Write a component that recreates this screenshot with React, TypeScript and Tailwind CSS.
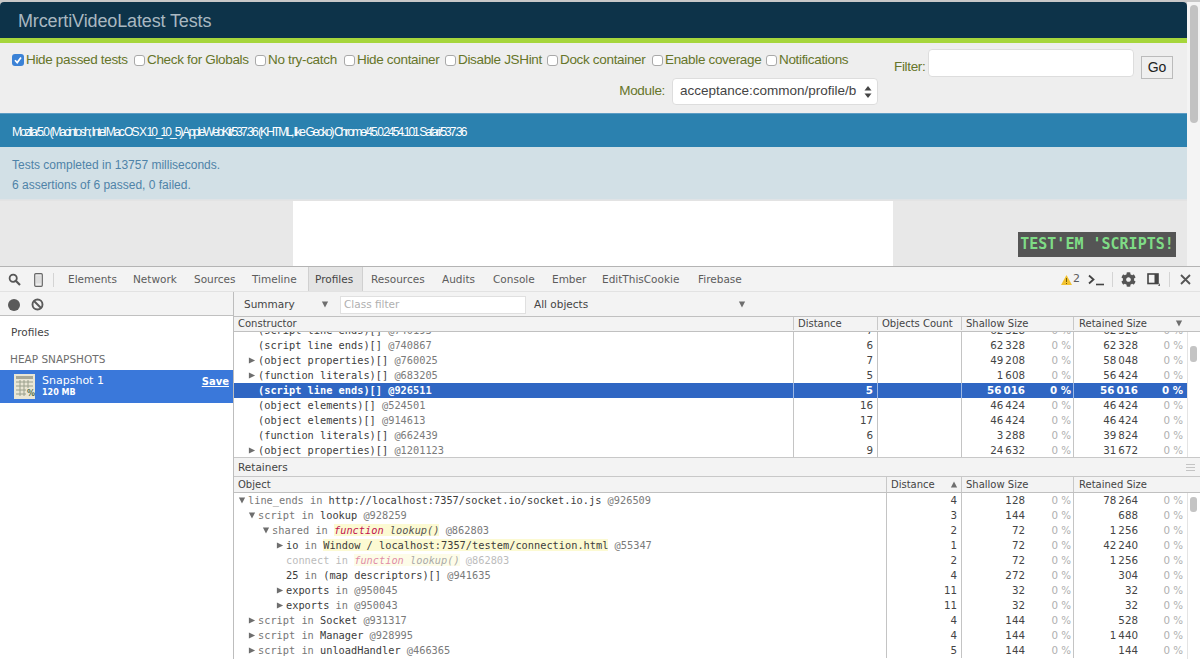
import { type FC, type ReactElement, type ReactNode } from "react";
import { FaCog } from "react-icons/fa";

const checks: { label: string; checked?: boolean; cls: string }[] = [
  { label: "Hide passed tests", checked: true, cls: "w-[122px]" },
  { label: "Check for Globals", cls: "w-[121px]" },
  { label: "No try-catch", cls: "w-[89px]" },
  { label: "Hide container", cls: "w-[101px]" },
  { label: "Disable JSHint", cls: "w-[102px]" },
  { label: "Dock container", cls: "w-[105px]" },
  { label: "Enable coverage", cls: "w-[114px]" },
  { label: "Notifications", cls: "w-[90px]" },
];

const tabs: { label: string; cls: string; active?: boolean }[] = [
  { label: "Elements", cls: "w-[65px] pl-[8px]" },
  { label: "Network", cls: "w-[61px] pl-[8px]" },
  { label: "Sources", cls: "w-[58px] pl-[8px]" },
  { label: "Timeline", cls: "w-[64px] pl-[8px]" },
  { label: "Profiles", cls: "w-[55px] pl-[6px]", active: true },
  { label: "Resources", cls: "w-[71px] pl-[8px]" },
  { label: "Audits", cls: "w-[51px] pl-[8px]" },
  { label: "Console", cls: "w-[59px] pl-[8px]" },
  { label: "Ember", cls: "w-[50px] pl-[8px]" },
  { label: "EditThisCookie", cls: "w-[96px] pl-[8px]" },
  { label: "Firebase", cls: "w-[60px] pl-[8px]" },
];

const Tri: FC<{ dir?: "right" | "down" | "up"; selected?: boolean }> = ({ dir = "right", selected }): ReactElement => {
  const pts = dir === "right" ? "1,1 8,4.5 1,8" : dir === "down" ? "1,1 8,1 4.5,8" : "1,8 8,8 4.5,1";
  return (
    <svg width="8" height="9" viewBox="0 0 9 9" className="shrink-0">
      <polygon points={pts} fill={selected ? "#fff" : "#6e6e6e"} />
    </svg>
  );
};

const Check: FC<{ checked?: boolean }> = ({ checked }): ReactElement =>
  checked ? (
    <span className="mr-[2px] flex h-[12px] w-[12px] shrink-0 items-center justify-center rounded-[3px] bg-[#3b82d6]">
      <svg width="10" height="10" viewBox="0 0 10 10">
        <path d="M2 5.2 L4.2 7.6 L8 2.4" fill="none" stroke="#fff" strokeWidth="1.7" />
      </svg>
    </span>
  ) : (
    <span className="mr-[2px] h-[11px] w-[11px] shrink-0 rounded-[3px] border border-[#a9a9a9] bg-white" />
  );

const Id: FC<{ children: ReactNode }> = ({ children }): ReactElement => <span className="text-[#7a7a7a]">{children}</span>;
const Prop: FC<{ children: ReactNode }> = ({ children }): ReactElement => <span className="text-[#777]">{children}</span>;
const Fn: FC = (): ReactElement => (
  <span className="bg-[#fcfad2] italic">
    <span className="text-[#c2134f]">function</span> <span className="text-[#555]">lookup()</span>
  </span>
);

type RowData = {
  indent: string;
  tri?: "right" | "down";
  name: ReactNode;
  dist: string;
  shallow: string;
  retained: string;
  selected?: boolean;
  clipped?: boolean;
};

const ctor = (name: string, id: string): ReactNode => (
  <>
    {name} <Id>{id}</Id>
  </>
);

// sizes use a thin space between thousands, as devtools does
const topRows: RowData[] = [
  { indent: "pl-[14px]", name: ctor("(script line ends)[]", "@740193"), dist: "7", shallow: "62\u2009328", retained: "62\u2009328", clipped: true },
  { indent: "pl-[14px]", name: ctor("(script line ends)[]", "@740867"), dist: "6", shallow: "62\u2009328", retained: "62\u2009328" },
  { indent: "pl-[14px]", tri: "right", name: ctor("(object properties)[]", "@760025"), dist: "7", shallow: "49\u2009208", retained: "58\u2009048" },
  { indent: "pl-[14px]", tri: "right", name: ctor("(function literals)[]", "@683205"), dist: "5", shallow: "1\u2009608", retained: "56\u2009424" },
  { indent: "pl-[14px]", name: "(script line ends)[] @926511", dist: "5", shallow: "56\u2009016", retained: "56\u2009016", selected: true },
  { indent: "pl-[14px]", name: ctor("(object elements)[]", "@524501"), dist: "16", shallow: "46\u2009424", retained: "46\u2009424" },
  { indent: "pl-[14px]", name: ctor("(object elements)[]", "@914613"), dist: "17", shallow: "46\u2009424", retained: "46\u2009424" },
  { indent: "pl-[14px]", name: ctor("(function literals)[]", "@662439"), dist: "6", shallow: "3\u2009288", retained: "39\u2009824" },
  { indent: "pl-[14px]", tri: "right", name: ctor("(object properties)[]", "@1201123"), dist: "9", shallow: "24\u2009632", retained: "31\u2009672" },
];

const bottomRows: RowData[] = [
  {
    indent: "pl-[4px]",
    tri: "down",
    name: (
      <>
        <Prop>line_ends</Prop> <Prop>in</Prop> http://localhost:7357/socket.io/socket.io.js <Id>@926509</Id>
      </>
    ),
    dist: "4",
    shallow: "128",
    retained: "78\u2009264",
  },
  {
    indent: "pl-[14px]",
    tri: "down",
    name: (
      <>
        <Prop>script</Prop> <Prop>in</Prop> lookup <Id>@928259</Id>
      </>
    ),
    dist: "3",
    shallow: "144",
    retained: "688",
  },
  {
    indent: "pl-[28px]",
    tri: "down",
    name: (
      <>
        <Prop>shared</Prop> <Prop>in</Prop> <Fn /> <Id>@862803</Id>
      </>
    ),
    dist: "2",
    shallow: "72",
    retained: "1\u2009256",
  },
  {
    indent: "pl-[42px]",
    tri: "right",
    name: (
      <>
        io <Prop>in</Prop> <span className="bg-[#fcfad2]">Window / localhost:7357/testem/connection.html</span> <Id>@55347</Id>
      </>
    ),
    dist: "1",
    shallow: "72",
    retained: "42\u2009240",
  },
  {
    indent: "pl-[42px]",
    name: (
      <span className="opacity-50">
        <Prop>connect</Prop> <Prop>in</Prop> <Fn /> <Id>@862803</Id>
      </span>
    ),
    dist: "2",
    shallow: "72",
    retained: "1\u2009256",
  },
  {
    indent: "pl-[42px]",
    name: (
      <>
        25 <Prop>in</Prop> (map descriptors)[] <Id>@941635</Id>
      </>
    ),
    dist: "4",
    shallow: "272",
    retained: "304",
  },
  {
    indent: "pl-[42px]",
    tri: "right",
    name: (
      <>
        exports <Prop>in</Prop> <Id>@950045</Id>
      </>
    ),
    dist: "11",
    shallow: "32",
    retained: "32",
  },
  {
    indent: "pl-[42px]",
    tri: "right",
    name: (
      <>
        exports <Prop>in</Prop> <Id>@950043</Id>
      </>
    ),
    dist: "11",
    shallow: "32",
    retained: "32",
  },
  {
    indent: "pl-[14px]",
    tri: "right",
    name: (
      <>
        <Prop>script</Prop> <Prop>in</Prop> Socket <Id>@931317</Id>
      </>
    ),
    dist: "4",
    shallow: "144",
    retained: "528",
  },
  {
    indent: "pl-[14px]",
    tri: "right",
    name: (
      <>
        <Prop>script</Prop> <Prop>in</Prop> Manager <Id>@928995</Id>
      </>
    ),
    dist: "4",
    shallow: "144",
    retained: "1\u2009440",
  },
  {
    indent: "pl-[14px]",
    tri: "right",
    name: (
      <>
        <Prop>script</Prop> <Prop>in</Prop> unloadHandler <Id>@466365</Id>
      </>
    ),
    dist: "5",
    shallow: "144",
    retained: "144",
  },
];

const Row: FC<{ row: RowData; variant: "top" | "bottom" }> = ({ row, variant }): ReactElement => {
  const sel = row.selected;
  const line = sel ? "border-[#9db8e4]" : "border-[#c4c4c4]";
  const pct = sel ? "font-bold text-white" : "text-[#b0b0b0]";
  return (
    <div
      className={`flex h-[15px] shrink-0 items-center font-['DejaVu_Sans',sans-serif] text-[10.3px] leading-[15px] ${
        sel ? "bg-[#2f66c3] font-bold text-white" : "text-[#444]"
      }`}
    >
      <div
        className={`flex h-full items-center whitespace-nowrap font-['DejaVu_Sans_Mono',monospace] text-[10.3px] ${row.indent} ${
          variant === "top" ? "w-[560px]" : "w-[653px]"
        } border-r ${line} ${sel ? "text-white" : "text-[#3c3c3c]"}`}
      >
        <span className="flex w-[10px] shrink-0 items-center">{row.tri && <Tri dir={row.tri} />}</span>
        <span>{row.name}</span>
      </div>
      <div className={`h-full pr-[4px] text-right border-r ${line} ${variant === "top" ? "w-[84px]" : "w-[75px]"}`}>{row.dist}</div>
      {variant === "top" && <div className={`h-full w-[84px] border-r ${line}`} />}
      <div className={`flex h-full w-[112px] justify-end border-r ${line}`}>
        <span className="pr-[2px]">{row.shallow}</span>
        <span className={`w-[46px] pr-[2px] text-right ${pct}`}>0 %</span>
      </div>
      <div className="flex h-full w-[113px] justify-end">
        <span className="pr-[2px]">{row.retained}</span>
        <span className={`w-[47px] pr-[4px] text-right ${pct}`}>0 %</span>
      </div>
    </div>
  );
};

const HeadCell: FC<{ cls: string; children: ReactNode }> = ({ cls, children }): ReactElement => (
  <div className={`flex h-full shrink-0 items-center justify-between border-r border-[#c8c8c8] pl-[4px] pr-[3px] ${cls}`}>{children}</div>
);

const SnapshotIcon: FC = (): ReactElement => (
  <svg width="21" height="25" viewBox="0 0 21 25" className="shrink-0">
    <rect width="21" height="25" fill="#e9e6d5" />
    <rect x="2" y="2" width="17" height="3" fill="#a7a898" />
    <path d="M2 8h17M2 12h17M2 16h10M2 20h10M6 6v16M10 6v16M14 6v8" stroke="#9aa08c" strokeWidth="1" fill="none" />
    <text x="13" y="22" fontSize="8" fontWeight="700" fill="#4e6b4a" fontFamily="DejaVu Sans, sans-serif">
      %
    </text>
  </svg>
);

export default function App(): ReactElement {
  return (
    <div className="flex h-[659px] w-[1200px] flex-col overflow-hidden bg-white font-['Liberation_Sans',sans-serif]">
      {/* test page */}
      <div className="flex h-[266px] shrink-0 bg-[#c8c8c8] pt-[2px]">
        <div className="flex w-[1187px] flex-col overflow-hidden rounded-t-[4px] bg-[#eee]">
          <div className="flex h-[36px] shrink-0 items-center bg-[#0d3349] pl-[18px] pt-[2px] text-[18px] tracking-[-0.13px] text-[#a9b8c1]">
            MrcertiVideoLatest Tests
          </div>
          <div className="h-[5px] shrink-0 bg-[#a6d63c]" />
          <div className="flex h-[71px] shrink-0 border-b border-[#5c9cc4] bg-[#eee] text-[13.5px] tracking-[-0.33px] text-[#66752a]">
            <div className="flex w-[878px] shrink-0 flex-col pl-[12px]">
              <div className="mt-[9px] flex h-[16px] items-center">
                {checks.map((c) => (
                  <label key={c.label} className={`flex shrink-0 items-center whitespace-nowrap ${c.cls}`}>
                    <Check checked={c.checked} />
                    {c.label}
                  </label>
                ))}
              </div>
              <div className="mt-[10px] flex items-center justify-end">
                <span className="mr-[7px]">Module:</span>
                <div className="flex h-[27px] w-[206px] items-center justify-between rounded-[4px] border border-[#ddd] bg-white pl-[7px] pr-[5px] text-[13.5px] tracking-[0px] text-[#444]">
                  <span className="w-[178px] overflow-hidden whitespace-nowrap">acceptance:common/profile/b</span>
                  <svg width="8" height="12" viewBox="0 0 8 12">
                    <polygon points="4,0 7.5,4.5 0.5,4.5" fill="#444" />
                    <polygon points="4,12 7.5,7.5 0.5,7.5" fill="#444" />
                  </svg>
                </div>
              </div>
            </div>
            <div className="flex flex-1 items-start pl-[16px] pt-[6px]">
              <span className="mt-[8px] w-[34px]">Filter:</span>
              <div className="h-[28px] w-[206px] rounded-[4px] border border-[#ddd] bg-white" />
              <div className="ml-[7px] mt-[7px] flex h-[23px] w-[32px] items-center justify-center border border-[#bbb] bg-[#efefef] text-[14px] tracking-[0px] text-[#222]">
                Go
              </div>
            </div>
          </div>
          <div className="flex h-[33px] shrink-0 items-center whitespace-nowrap bg-[#2b81af] pl-[12px] pt-[2px] text-[12px] tracking-[-1.94px] text-white">
            Mozilla/5.0 (Macintosh; Intel Mac OS X 10_10_5) AppleWebKit/537.36 (KHTML, like Gecko) Chrome/45.0.2454.101 Safari/537.36
          </div>
          <div className="flex h-[53px] shrink-0 flex-col gap-[3px] border-b border-[#dfe3e6] bg-[#d2e0e6] pl-[12px] pt-[10px] text-[12px] leading-[17px]">
            <div className="text-[#4f83a8]">Tests completed in 13757 milliseconds.</div>
            <div className="text-[#4f83a8]">6 assertions of 6 passed, 0 failed.</div>
          </div>
          <div className="flex flex-1 border-t border-[#e3e3e3]">
            <div className="w-[293px] shrink-0 bg-[#e8e8e8]" />
            <div className="w-[600px] shrink-0 bg-white" />
            <div className="flex flex-1 items-end justify-end bg-[#e8e8e8] pb-[9px] pr-[11px]">
              <div className="flex h-[25px] w-[158px] items-center justify-center whitespace-nowrap bg-[#555] font-['DejaVu_Sans_Mono',monospace] text-[15px] font-bold text-[#7fdc86]">
                TEST'EM 'SCRIPTS!
              </div>
            </div>
          </div>
        </div>
        <div className="w-[13px] shrink-0 bg-[#f4f4f4] pl-[3px] pt-[3px]">
          <div className="h-[118px] w-[8px] rounded-[4px] bg-[#c2c2c2]" />
        </div>
      </div>

      {/* devtools toolbar */}
      <div className="flex h-[26px] shrink-0 items-center border-b border-t border-b-[#e2e2e2] border-t-[#b4b4b4] bg-[#f3f3f3] font-['DejaVu_Sans',sans-serif] text-[10.5px] text-[#5c5c5c]">
        <div className="mt-[1px] flex w-[54px] shrink-0 items-center border-r border-[#d4d4d4] pl-[8px]">
          <svg width="13" height="13" viewBox="0 0 13 13">
            <circle cx="5.2" cy="5.2" r="3.6" fill="none" stroke="#555" strokeWidth="1.8" />
            <path d="M8 8l4 4" stroke="#555" strokeWidth="2.2" />
          </svg>
          <svg width="9" height="14" viewBox="0 0 9 14" className="ml-[13px]">
            <rect x="0.7" y="0.7" width="7.6" height="12.6" rx="1" fill="#eee" stroke="#666" strokeWidth="1.2" />
            <rect x="2" y="2.5" width="5" height="8" fill="#ddd" />
          </svg>
        </div>
        <div className="ml-[6px] flex h-full items-center">
          {tabs.map((t) => (
            <div
              key={t.label}
              className={`flex h-full shrink-0 items-center whitespace-nowrap pt-[2px] ${t.cls} ${
                t.active ? "border-x border-[#d0d0d0] bg-[#e4e4e4] text-[#444]" : ""
              }`}
            >
              {t.label}
            </div>
          ))}
        </div>
        <div className="ml-auto mt-[1px] flex items-center pr-[9px]">
          <svg width="11" height="10" viewBox="0 0 11 10">
            <polygon points="5.5,0 11,10 0,10" fill="#f2c230" />
            <rect x="5" y="3" width="1" height="4" fill="#7a5c00" />
            <rect x="5" y="8" width="1" height="1" fill="#7a5c00" />
          </svg>
          <span className="ml-[1px] text-[11px]">2</span>
          <svg width="16" height="12" viewBox="0 0 16 12" className="ml-[8px]">
            <path d="M1 1.5l4.5 4-4.5 4" fill="none" stroke="#444" strokeWidth="1.8" />
            <path d="M8 10.5h8" stroke="#444" strokeWidth="1.6" />
          </svg>
          <div className="mx-[8px] h-[15px] w-px bg-[#d4d4d4]" />
          <FaCog size={15} color="#555" />
          <svg width="14" height="13" viewBox="0 0 14 13" className="ml-[11px]">
            <rect x="1" y="1" width="10" height="9.5" fill="none" stroke="#444" strokeWidth="1.6" />
            <rect x="7.5" y="1" width="3.5" height="9.5" fill="#444" />
            <path d="M13 10v3h-2z" fill="#666" />
          </svg>
          <div className="ml-[8px] mr-[10px] h-[15px] w-px bg-[#d4d4d4]" />
          <svg width="11" height="11" viewBox="0 0 11 11">
            <path d="M1 1l9 9M10 1l-9 9" stroke="#555" strokeWidth="1.8" />
          </svg>
        </div>
      </div>

      {/* devtools body */}
      <div className="flex min-h-0 flex-1 font-['DejaVu_Sans',sans-serif] text-[#444]">
        <aside className="flex w-[234px] shrink-0 flex-col border-r border-[#bdbdbd] bg-white">
          <div className="flex h-[24px] shrink-0 items-center border-b border-[#c0c0c0] bg-[#f3f3f3] pl-[8px] pt-[2px]">
            <span className="h-[12px] w-[12px] rounded-full bg-[#5a5a5a]" />
            <svg width="13" height="13" viewBox="0 0 13 13" className="ml-[11px]">
              <circle cx="6.5" cy="6.5" r="5" fill="none" stroke="#5a5a5a" strokeWidth="1.9" />
              <path d="M3 3l7 7" stroke="#5a5a5a" strokeWidth="1.9" />
            </svg>
          </div>
          <div className="mt-[8px] pl-[11px] text-[10.5px] leading-[16px] text-[#444]">Profiles</div>
          <div className="mt-[11px] pl-[10px] text-[10.5px] leading-[16px] text-[#6e6e6e]">HEAP SNAPSHOTS</div>
          <div className="mt-[3px] flex h-[33px] items-center bg-[#3a78da] pl-[14px] pr-[4px] text-white">
            <SnapshotIcon />
            <div className="ml-[7px] flex flex-col">
              <span className="text-[11px] leading-[12px]">Snapshot 1</span>
              <span className="text-[8px] font-bold leading-[11px]">120 MB</span>
            </div>
            <span className="mb-[11px] ml-auto text-[10px] font-bold underline">Save</span>
          </div>
        </aside>

        <section className="flex min-w-0 flex-1 flex-col">
          <div className="flex h-[24px] shrink-0 items-center bg-[#f3f3f3] pt-[1px] text-[10.5px] text-[#444]">
            <div className="flex w-[106px] items-center justify-between pl-[10px] pr-[11px]">
              <span>Summary</span>
              <Tri dir="down" />
            </div>
            <div className="flex h-[18px] w-[186px] items-center border border-[#e0e0e0] bg-white pl-[3px] text-[#b0b0b0]">Class filter</div>
            <div className="flex w-[220px] items-center justify-between pl-[8px]">
              <span>All objects</span>
              <Tri dir="down" />
            </div>
          </div>

          <div className="flex h-[16px] shrink-0 items-center border-y border-[#c0c0c0] bg-[#f3f3f3] pb-[1px] text-[10px] text-[#444]">
            <HeadCell cls="w-[560px]">Constructor</HeadCell>
            <HeadCell cls="w-[84px]">Distance</HeadCell>
            <HeadCell cls="w-[84px]">Objects Count</HeadCell>
            <HeadCell cls="w-[112px]">Shallow Size</HeadCell>
            <div className="flex h-full flex-1 items-center justify-between pl-[5px] pr-[17px]">
              Retained Size
              <Tri dir="down" />
            </div>
          </div>

          <div className="flex h-[125px] shrink-0 overflow-hidden">
            <div className="flex w-[953px] shrink-0 flex-col">
              <div className="-mt-[9px]">
                {topRows.map((r) => (
                  <Row key={String(r.shallow) + r.retained + r.dist} row={r} variant="top" />
                ))}
              </div>
            </div>
            <div className="flex-1 border-l border-[#e4e4e4] pl-[2px] pt-[14px]">
              <div className="h-[16px] w-[7px] rounded-[3px] bg-[#c4c4c4]" />
            </div>
          </div>

          <div className="flex h-[20px] shrink-0 items-center justify-between border-y border-[#c8c8c8] bg-[#f3f3f3] pl-[4px] pr-[5px] pt-[1px] text-[10.5px] text-[#444]">
            Retainers
            <svg width="9" height="7" viewBox="0 0 9 7">
              <path d="M0 .5h9M0 3.5h9M0 6.5h9" stroke="#c4c4c4" strokeWidth="1" />
            </svg>
          </div>

          <div className="flex h-[16px] shrink-0 items-center border-b border-[#c0c0c0] bg-[#f3f3f3] text-[10px] text-[#444]">
            <HeadCell cls="w-[653px]">Object</HeadCell>
            <HeadCell cls="w-[75px]">
              Distance
              <Tri dir="up" />
            </HeadCell>
            <HeadCell cls="w-[112px]">Shallow Size</HeadCell>
            <div className="flex h-full flex-1 items-center pl-[5px]">Retained Size</div>
          </div>

          <div className="flex min-h-0 flex-1 overflow-hidden">
            <div className="flex w-[953px] shrink-0 flex-col">
              {bottomRows.map((r) => (
                <Row key={r.indent + String(r.retained) + r.dist + r.shallow} row={r} variant="bottom" />
              ))}
            </div>
            <div className="flex-1 border-l border-[#e4e4e4] pl-[2px] pt-[4px]">
              <div className="h-[15px] w-[7px] rounded-[3px] bg-[#c4c4c4]" />
            </div>
          </div>
        </section>
      </div>
    </div>
  );
}
